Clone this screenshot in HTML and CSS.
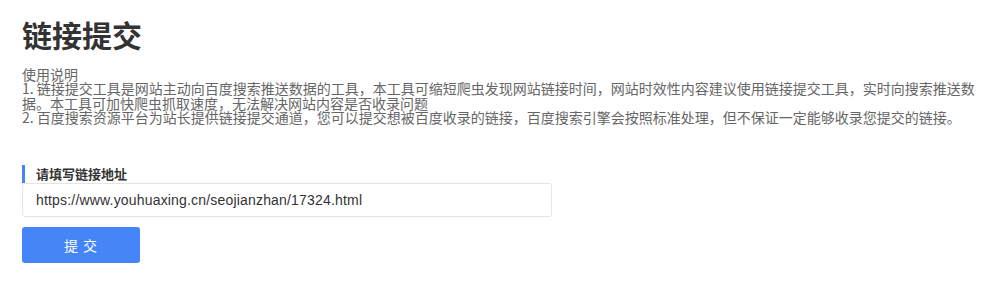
FILE: index.html
```html
<!DOCTYPE html>
<html lang="zh-CN">
<head>
<meta charset="utf-8">
<title>链接提交</title>
<link rel="stylesheet" href="styles.css">
</head>
<body>
<div class="page">
  <h1 class="title">链接提交</h1>
  <div class="intro">
    <div>使用说明</div>
    <div>1. 链接提交工具是网站主动向百度搜索推送数据的工具，本工具可缩短爬虫发现网站链接时间，网站时效性内容建议使用链接提交工具，实时向搜索推送数据。本工具可加快爬虫抓取速度，无法解决网站内容是否收录问题</div>
    <div>2. 百度搜索资源平台为站长提供链接提交通道，您可以提交想被百度收录的链接，百度搜索引擎会按照标准处理，但不保证一定能够收录您提交的链接。</div>
  </div>
  <form class="form">
    <label class="label" for="url">请填写链接地址</label>
    <input class="input" id="url" type="text" value="https://www.youhuaxing.cn/seojianzhan/17324.html">
    <button class="btn" type="button">提 交</button>
  </form>
</div>
</body>
</html>
```

FILE: styles.css
```css
html, body {
  margin: 0;
  padding: 0;
  background: #fff;
}
.page {
  padding: 19px 15px 0 22px;
  font-family: "Noto Sans CJK SC", "Noto Sans", sans-serif;
}
.title {
  margin: 0;
  font-size: 30px;
  line-height: 30px;
  font-weight: 700;
  color: #333;
}
.intro {
  margin-top: 18px;
  font-size: 14px;
  line-height: 14.3px;
  color: #666;
}
.form {
  margin-top: 41px;
  display: flex;
  flex-direction: column;
  align-items: flex-start;
}
.label {
  display: block;
  border-left: 3px solid #4285f4;
  padding-left: 11px;
  font-size: 13px;
  line-height: 18px;
  font-weight: 700;
  color: #333;
}
.input {
  box-sizing: border-box;
  width: 530px;
  height: 34px;
  margin: 0;
  padding: 0 0 0 13px;
  border: 1px solid #e4e4e4;
  border-radius: 3px;
  font-family: "Liberation Sans", "Noto Sans CJK SC", sans-serif;
  font-size: 14px;
  letter-spacing: 0.18px;
  color: #333;
  outline: none;
}
.btn {
  box-sizing: border-box;
  margin-top: 10px;
  width: 118px;
  height: 36px;
  border: none;
  border-radius: 3px;
  background: #4585f8;
  color: #fff;
  font-family: "Noto Sans CJK SC", sans-serif;
  font-size: 14px;
  letter-spacing: 1px;
  cursor: pointer;
}
```
